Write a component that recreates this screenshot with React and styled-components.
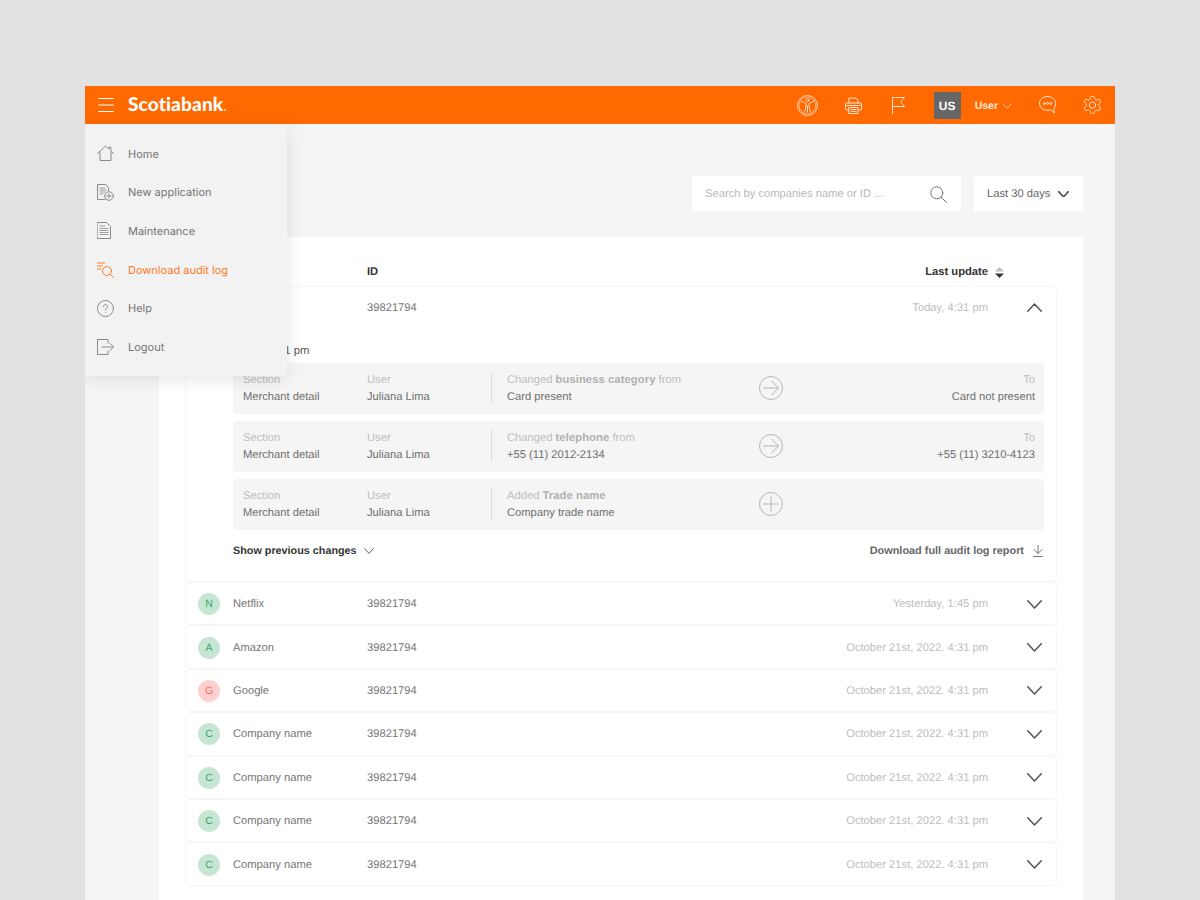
import styled, { createGlobalStyle } from 'styled-components';

const GlobalStyle = createGlobalStyle`
  html, body {
    margin: 0;
    height: 900px;
    overflow: hidden;
    background: #e2e2e2;
  }
  body {
    font-family: "Liberation Sans", Arial, sans-serif;
    text-rendering: geometricPrecision;
  }
`;

const Frame = styled.div`
  position: relative;
  margin: 86px 85px 0;
  height: 814px;
  background: #f5f5f5;
  overflow: hidden;
`;

const Header = styled.header`
  height: 38px;
  background: #ff6900;
  display: flex;
  align-items: center;
  justify-content: space-between;
  padding: 0 14px 0 13px;
  color: #fff;
`;

const Brand = styled.div`
  display: flex;
  align-items: center;
  gap: 14px;
`;

const Logo = styled.span`
  font-family: Lato, sans-serif;
  font-weight: 900;
  font-size: 19px;
  line-height: 20px;
  letter-spacing: 0.15px;
  padding-top: 1px;
  span {
    color: #ffc9a0;
    font-size: 15px;
  }
`;

const HeaderTools = styled.div`
  display: flex;
  align-items: center;
  gap: 28px;
`;

const HeaderTool = styled.span`
  display: block;
  margin-left: ${(p) => p.$shift || 0}px;
`;

const UserBlock = styled.div`
  display: flex;
  align-items: center;
  gap: 14px;
  margin-left: 1px;
`;

const UserBadge = styled.div`
  width: 27px;
  height: 27px;
  box-sizing: border-box;
  padding-top: 1px;
  background: #666;
  display: flex;
  align-items: center;
  justify-content: center;
  font-size: 12px;
  font-weight: 700;
`;

const UserName = styled.div`
  display: flex;
  align-items: center;
  gap: 5px;
  padding-top: 2px;
  font-size: 10.5px;
  font-weight: 700;
  color: #ffe9da;
`;

const Menu = styled.nav`
  position: absolute;
  top: 38px;
  left: 0;
  z-index: 2;
  width: 202px;
  padding: 10.5px 0 9.5px;
  background: #f2f2f2;
  box-shadow: 0 3px 18px rgba(0, 0, 0, 0.1);
`;

const MenuItem = styled.div`
  height: 38.6px;
  display: flex;
  align-items: center;
  gap: 14px;
  padding-left: 12px;
  font-family: Inter, sans-serif;
  font-size: 11px;
  color: ${(p) => (p.$active ? '#ff7a1f' : '#757575')};
`;

const MenuIconSlot = styled.span`
  flex: none;
  width: 17px;
  display: flex;
  align-items: center;
`;

const Main = styled.main`
  padding: 52px 32px 0 74px;
`;

const Toolbar = styled.div`
  display: flex;
  justify-content: flex-end;
  gap: 13px;
  margin-bottom: 26px;
`;

const Search = styled.div`
  width: 269px;
  height: 35px;
  box-sizing: border-box;
  padding: 1px 14px 0 13px;
  background: #fff;
  border-radius: 2px;
  display: flex;
  align-items: center;
  justify-content: space-between;
  font-size: 11.2px;
  line-height: 13px;
  color: #b8b8b8;
`;

const RangeSelect = styled.div`
  width: 109px;
  height: 35px;
  box-sizing: border-box;
  padding: 1px 14px 0 13px;
  background: #fff;
  border-radius: 2px;
  display: flex;
  align-items: center;
  justify-content: space-between;
  font-size: 11.2px;
  line-height: 13px;
  color: #666;
`;

const Card = styled.section`
  background: #fff;
  padding: 24px 26px 60px;
`;

const TableHead = styled.div`
  height: 20px;
  box-sizing: border-box;
  padding: 2px 53px 0 182px;
  margin-bottom: 5px;
  display: flex;
  align-items: center;
  justify-content: space-between;
  font-size: 11.2px;
  font-weight: 700;
  color: #333;
`;

const SortLabel = styled.div`
  display: flex;
  align-items: center;
  gap: 7px;
`;

const Row = styled.div`
  box-sizing: border-box;
  border: 1px solid #f6f6f6;
  border-radius: 4px;
`;

const RowHead = styled.div`
  height: ${(p) => (p.$open ? '41px' : '41.4px')};
  box-sizing: border-box;
  padding: ${(p) => (p.$open ? '0' : '1px')} 14px 0 12px;
  display: flex;
  align-items: center;
  font-size: 11.2px;
  color: #757575;
`;

const Avatar = styled.div`
  flex: none;
  width: 22px;
  height: 22px;
  margin-right: 13px;
  border-radius: 50%;
  display: flex;
  align-items: center;
  justify-content: center;
  font-size: 10.5px;
  background: ${(p) => (p.$tone === 'red' ? '#ffcfcf' : '#c6e5d3')};
  color: ${(p) => (p.$tone === 'red' ? '#f2706f' : '#35a565')};
`;

const CompanyName = styled.div`
  width: 134px;
  flex: none;
`;

const CompanyId = styled.div`
  flex: none;
`;

const UpdatedAt = styled.div`
  flex: 1;
  text-align: right;
  color: #bdbdbd;
  margin-right: 39px;
`;

const RowBody = styled.div`
  padding: 0 12px 0 47px;
  height: 253px;
`;

const ChangeTime = styled.div`
  height: 35px;
  display: flex;
  align-items: center;
  font-size: 11.3px;
  color: #555;
  padding-top: 10px;
  box-sizing: border-box;
`;

const ChangeList = styled.div`
  display: flex;
  flex-direction: column;
  gap: 7px;
`;

const Change = styled.div`
  height: 51px;
  padding: 0 9px 0 10px;
  background: #f5f5f5;
  border-radius: 4px;
  display: flex;
  align-items: center;
  font-size: 11.2px;
`;

const Cell = styled.div`
  flex: none;
  width: ${(p) => p.$width}px;
  display: flex;
  flex-direction: column;
  gap: 3px;
  line-height: 14px;
  text-align: ${(p) => (p.$right ? 'right' : 'left')};
  ${(p) => p.$grow && 'flex: 1;'}
`;

const Label = styled.span`
  color: #bdbdbd;
  b {
    font-weight: 700;
    color: #b0b0b0;
    letter-spacing: 0.1px;
  }
`;

const Value = styled.span`
  color: #6e6e6e;
`;

const Divider = styled.div`
  flex: none;
  width: 1px;
  height: 32px;
  margin: -2px 15px 0 0;
  background: #dcdcdc;
`;

const RowFoot = styled.div`
  margin-top: 14px;
  height: 14px;
  display: flex;
  align-items: center;
  justify-content: space-between;
  font-weight: 700;
`;

const FootLink = styled.div`
  display: flex;
  align-items: center;
  gap: ${(p) => p.$gap}px;
  padding-right: ${(p) => p.$inset || 0}px;
  font-size: ${(p) => p.$size}px;
  color: ${(p) => p.$color};
`;

const IconNudge = styled.span`
  display: block;
  margin-top: -2px;
`;

const Icon = ({ size = 18, width, height, stroke = '#8a8a8a', sw = 1, vb = '0 0 18 18', children }) => (
  <svg
    width={width || size}
    height={height || size}
    viewBox={vb}
    fill="none"
    stroke={stroke}
    strokeWidth={sw}
    strokeLinecap="round"
    strokeLinejoin="round"
    style={{ flex: 'none', display: 'block' }}
  >
    {children}
  </svg>
);

const Burger = () => (
  <Icon width={16} height={16} vb="0 0 16 16" stroke="#fff" sw={1.2}>
    <path d="M.6 1.500h14.800M.6 8h14.800M.6 14.500h14.800" />
  </Icon>
);

const Vitruvian = () => (
  <Icon size={21} vb="0 0 21 21" stroke="#ffd9bd">
    <circle cx="10.500" cy="10.500" r="10" />
    <circle cx="10.500" cy="10.500" r="8.400" strokeWidth="0.7" />
    <circle cx="10.500" cy="5.200" r="1.500" />
    <path d="M4.500 6.500l4.500 2v2.500l-1.300 6M16.500 6.500l-4.500 2v2.500l1.300 6M10.500 11v6" />
  </Icon>
);

const Printer = () => (
  <Icon width={17} height={17} vb="0 0 17 17" stroke="#ffe3cf">
    <path d="M4 6V1h7l2 2v3M4 13H1.500a1 1 0 0 1-1-1V7a1 1 0 0 1 1-1h14a1 1 0 0 1 1 1v5a1 1 0 0 1-1 1H13" />
    <path d="M4 10.500h9v6H4zM1.500 8.500h14M6 12.500h5M6 14.500h5" />
  </Icon>
);

const Flag = () => (
  <Icon width={13} height={17} vb="0 0 13 17" stroke="#ffe3cf">
    <path d="M.5 16.500V.5h12l-4 4.500 4 4.500H.5" />
  </Icon>
);

const Chat = () => (
  <Icon width={17} height={18} vb="0 0 17 18" stroke="#ffe3cf">
    <path d="M8.500.5C4 .5.500 3.300.500 7.300s3.500 7 8 7c1.300 0 2.300-.2 3.300-.5l3.700 3.200-.8-4.300c1.400-1.300 1.800-3.300 1.800-5.400C16.500 3.300 13 .5 8.500.5z" />
    <circle cx="5.300" cy="7.500" r="1" />
    <circle cx="8.500" cy="7.500" r="1" />
    <circle cx="11.700" cy="7.500" r="1" />
  </Icon>
);

const Gear = () => (
  <Icon width={17} height={18} vb="2.500 2 19 20" stroke="#ffe3cf" sw="1.050">
    <path d="M12.220 2h-.44a2 2 0 0 0-2 2v.18a2 2 0 0 1-1 1.730l-.43.250a2 2 0 0 1-2 0l-.15-.08a2 2 0 0 0-2.730.730l-.22.380a2 2 0 0 0 .730 2.730l.15.100a2 2 0 0 1 1 1.720v.510a2 2 0 0 1-1 1.740l-.15.090a2 2 0 0 0-.730 2.730l.22.380a2 2 0 0 0 2.730.730l.15-.08a2 2 0 0 1 2 0l.43.250a2 2 0 0 1 1 1.730V20a2 2 0 0 0 2 2h.44a2 2 0 0 0 2-2v-.18a2 2 0 0 1 1-1.730l.43-.250a2 2 0 0 1 2 0l.15.080a2 2 0 0 0 2.730-.730l.22-.390a2 2 0 0 0-.730-2.730l-.15-.080a2 2 0 0 1-1-1.740v-.5a2 2 0 0 1 1-1.740l.15-.090a2 2 0 0 0 .730-2.730l-.22-.380a2 2 0 0 0-2.730-.730l-.15.080a2 2 0 0 1-2 0l-.43-.250a2 2 0 0 1-1-1.730V4a2 2 0 0 0-2-2z" />
    <circle cx="12" cy="12" r="3.500" />
  </Icon>
);

const HomeIcon = () => (
  <Icon width={17} height={17} vb="0 0 17 17">
    <path d="M.5 8.500L8.500 1l3.500 3.200V2h1.800v3.900l2.700 2.600M3 7v8.500h11V7" />
  </Icon>
);

const NewAppIcon = () => (
  <Icon width={17} height={17} vb="0 0 17 17">
    <path d="M8 15.500H.5V.5h8l3 3v3" />
    <path d="M3 4h5M3 6h6M3 8h5M3 10h3" strokeWidth="0.8" />
    <circle cx="12" cy="12" r="4.300" />
    <path d="M12 9.700v4.600M9.700 12h4.600" />
  </Icon>
);

const DocIcon = () => (
  <Icon width={14} height={17} vb="0 0 14 17">
    <path d="M.5.5h9l4 4v12H.5z" />
    <path d="M3 4h5M3 6.500h8M3 8.500h8M3 10.500h8M3 12.500h8" strokeWidth="0.8" />
  </Icon>
);

const AuditIcon = () => (
  <Icon width={17} height={16} vb="0 0 17 16" stroke="#ff7a1f">
    <path d="M.5 1h7M.5 4h5M.5 7h3" />
    <circle cx="10" cy="9" r="4.500" />
    <path d="M13.300 12.300l3.200 3.200" />
  </Icon>
);

const HelpIcon = () => (
  <Icon width={17} height={17} vb="0 0 17 17">
    <circle cx="8.500" cy="8.500" r="8" />
    <path d="M6.500 6.500a2 2 0 1 1 3.200 1.600c-.8.600-1.200 1-1.200 2" />
    <path d="M8.500 12.300v.2" />
  </Icon>
);

const LogoutIcon = () => (
  <Icon width={17} height={16} vb="0 0 17 16">
    <path d="M11 4V.5H.5v15H11V12M5 8h11.500M13 4.500L16.500 8 13 11.500" />
  </Icon>
);

const SearchIcon = () => (
  <Icon width={17} height={17} vb="0 0 17 17" stroke="#777">
    <circle cx="6.800" cy="6.800" r="6" />
    <path d="M11.200 11.200l5.300 5.300" />
  </Icon>
);

const Chevron = ({ size = 11, up, color = '#555', sw = 1.500 }) => (
  <Icon width={size} height={size * 0.6} vb="0 0 16 9.600" stroke={color} sw={sw}>
    <path d={up ? 'M.8 8.800L8 1l7.200 7.800' : 'M.8.800L8 8.600 15.200.8'} />
  </Icon>
);

const SortIcon = () => (
  <svg width="9" height="11" viewBox="0 0 9 11" style={{ display: 'block' }}>
    <path d="M4.500 0L9 4.500H0z" fill="#bdbdbd" />
    <path d="M4.500 11L0 6.500h9z" fill="#333" />
  </svg>
);

const ArrowCircle = () => (
  <Icon size={24} vb="0 0 24 24" stroke="#b5b5b5">
    <circle cx="12" cy="12" r="11.500" />
    <path d="M4.500 12h15M12.500 5l7 7-7 7" />
  </Icon>
);

const PlusCircle = () => (
  <Icon size={24} vb="0 0 24 24" stroke="#b5b5b5">
    <circle cx="12" cy="12" r="11.500" />
    <path d="M12 4.500v15M4.500 12h15" />
  </Icon>
);

const DownloadIcon = () => (
  <Icon width={10} height={12} vb="0 0 10 12" stroke="#777">
    <path d="M5 0v8.500M1 4.500l4 4 4-4M.5 11.500h9" />
  </Icon>
);

const menuItems = [
  { label: 'Home', icon: <HomeIcon /> },
  { label: 'New application', icon: <NewAppIcon /> },
  { label: 'Maintenance', icon: <DocIcon /> },
  { label: 'Download audit log', icon: <AuditIcon />, active: true },
  { label: 'Help', icon: <HelpIcon /> },
  { label: 'Logout', icon: <LogoutIcon /> },
];

const changes = [
  {
    title: <>Changed <b>business category</b> from</>,
    from: 'Card present',
    to: 'Card not present',
  },
  {
    title: <>Changed <b>telephone</b> from</>,
    from: '+55 (11) 2012-2134',
    to: '+55 (11) 3210-4123',
  },
  {
    title: <>Added <b>Trade name</b></>,
    from: 'Company trade name',
  },
];

const companies = [
  { name: 'Netflix', letter: 'N', date: 'Yesterday, 1:45 pm' },
  { name: 'Amazon', letter: 'A', date: 'October 21st, 2022. 4:31 pm' },
  { name: 'Google', letter: 'G', date: 'October 21st, 2022. 4:31 pm', tone: 'red' },
  { name: 'Company name', letter: 'C', date: 'October 21st, 2022. 4:31 pm' },
  { name: 'Company name', letter: 'C', date: 'October 21st, 2022. 4:31 pm' },
  { name: 'Company name', letter: 'C', date: 'October 21st, 2022. 4:31 pm' },
  { name: 'Company name', letter: 'C', date: 'October 21st, 2022. 4:31 pm' },
];

const App = () => {
  return (
    <>
      <GlobalStyle />
      <Frame>
        <Header>
          <Brand>
            <Burger />
            <Logo>Scotiabank<span>.</span></Logo>
          </Brand>
          <HeaderTools>
            <Vitruvian />
            <HeaderTool $shift={-1}><Printer /></HeaderTool>
            <HeaderTool $shift={2}><Flag /></HeaderTool>
            <UserBlock>
              <UserBadge>US</UserBadge>
              <UserName>User <Chevron size={8} color="#ffe9da" sw={1.500} /></UserName>
            </UserBlock>
            <Chat />
            <Gear />
          </HeaderTools>
        </Header>

        <Menu>
          {menuItems.map((item) => (
            <MenuItem key={item.label} $active={item.active}>
              <MenuIconSlot>{item.icon}</MenuIconSlot>
              {item.label}
            </MenuItem>
          ))}
        </Menu>

        <Main>
          <Toolbar>
            <Search>
              Search by companies name or ID ...
              <SearchIcon />
            </Search>
            <RangeSelect>
              Last 30 days
              <Chevron size={11} sw={2.400} />
            </RangeSelect>
          </Toolbar>

          <Card>
            <TableHead>
              <span>ID</span>
              <SortLabel>Last update <SortIcon /></SortLabel>
            </TableHead>

            <Row>
              <RowHead $open>
                <Avatar>C</Avatar>
                <CompanyName>Company</CompanyName>
                <CompanyId>39821794</CompanyId>
                <UpdatedAt>Today, 4:31 pm</UpdatedAt>
                <Chevron size={15} up color="#555" sw={1.600} />
              </RowHead>
              <RowBody>
                <ChangeTime>Today, 4:31 pm</ChangeTime>
                <ChangeList>
                  {changes.map((c) => (
                    <Change key={c.from}>
                      <Cell $width={124}>
                        <Label>Section</Label>
                        <Value>Merchant detail</Value>
                      </Cell>
                      <Cell $width={124}>
                        <Label>User</Label>
                        <Value>Juliana Lima</Value>
                      </Cell>
                      <Divider />
                      <Cell $width={252}>
                        <Label>{c.title}</Label>
                        <Value>{c.from}</Value>
                      </Cell>
                      <IconNudge>{c.to ? <ArrowCircle /> : <PlusCircle />}</IconNudge>
                      {c.to && (
                        <Cell $grow $right>
                          <Label>To</Label>
                          <Value>{c.to}</Value>
                        </Cell>
                      )}
                    </Change>
                  ))}
                </ChangeList>
                <RowFoot>
                  <FootLink $gap={7} $size={10.8} $color="#333">
                    Show previous changes <Chevron size={10} color="#555" sw={1.500} />
                  </FootLink>
                  <FootLink $gap={9} $size={10.9} $inset={1} $color="#666">
                    Download full audit log report <DownloadIcon />
                  </FootLink>
                </RowFoot>
              </RowBody>
            </Row>

            {companies.map((c, i) => (
              <Row key={i}>
                <RowHead>
                  <Avatar $tone={c.tone}>{c.letter}</Avatar>
                  <CompanyName>{c.name}</CompanyName>
                  <CompanyId>39821794</CompanyId>
                  <UpdatedAt>{c.date}</UpdatedAt>
                  <Chevron size={15} color="#555" sw={1.600} />
                </RowHead>
              </Row>
            ))}
          </Card>
        </Main>
      </Frame>
    </>
  );
};

export default App;
